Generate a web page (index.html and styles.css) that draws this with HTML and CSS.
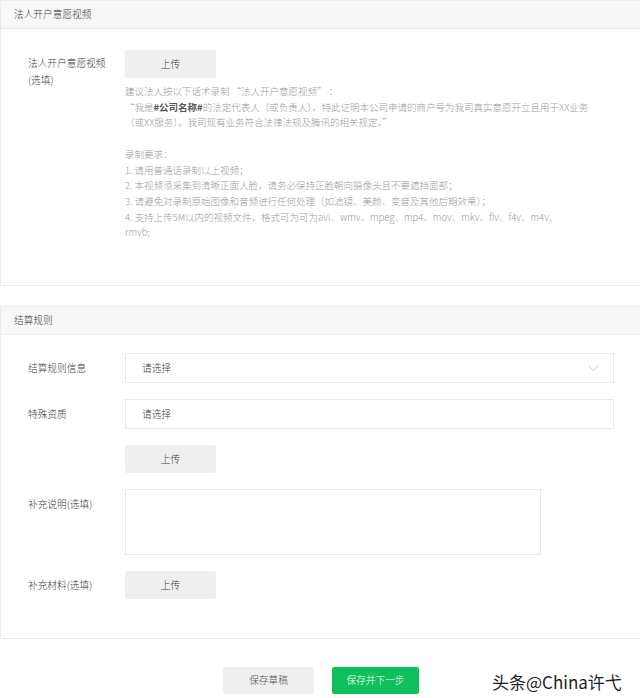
FILE: index.html
```html
<!DOCTYPE html>
<html lang="zh-CN">
<head>
<meta charset="utf-8">
<title>法人开户意愿视频</title>
<link rel="stylesheet" href="styles.css">
</head>
<body>
<div class="page">
  <section class="card card-video">
    <div class="card-head">法人开户意愿视频</div>
    <div class="card-body">
      <div class="row">
        <div class="label label-multi">法人开户意愿视频<br>(选填)</div>
        <div class="control">
          <div class="btn-upload">上传</div>
          <div class="desc">
            <div>建议法人按以下话术录制 “法人开户意愿视频” ：</div>
            <div>“我是<b>#公司名称#</b>的法定代表人（或负责人），特此证明本公司申请的商户号为我司真实意愿开立且用于XX业务</div>
            <div>（或XX服务）。我司现有业务符合法律法规及腾讯的相关规定。”</div>
            <div class="blank"></div>
            <div>录制要求：</div>
            <div>1. 请用普通话录制以上视频；</div>
            <div>2. 本视频须采集到清晰正面人脸，请务必保持正脸朝向摄像头且不要遮挡面部；</div>
            <div>3. 请避免对录制原始图像和音频进行任何处理（如滤镜、美颜、变音及其他后期效果）；</div>
            <div>4. 支持上传5M以内的视频文件，格式可为可为avi、wmv、mpeg、mp4、mov、mkv、flv、f4v、m4v、</div>
            <div>rmvb;</div>
          </div>
        </div>
      </div>
    </div>
  </section>

  <section class="card card-rules">
    <div class="card-head">结算规则</div>
    <div class="card-body form">
      <div class="row">
        <div class="label">结算规则信息</div>
        <div class="select">
          <span>请选择</span>
          <svg class="chev" width="11" height="7" viewBox="0 0 11 7"><polyline points="0.5,0.5 5.5,5.5 10.5,0.5" fill="none" stroke="#cfcfcf" stroke-width="1"/></svg>
        </div>
      </div>
      <div class="row">
        <div class="label">特殊资质</div>
        <div class="select"><span>请选择</span></div>
      </div>
      <div class="row">
        <div class="label"></div>
        <div class="btn-upload">上传</div>
      </div>
      <div class="row">
        <div class="label">补充说明(选填)</div>
        <div class="textarea"></div>
      </div>
      <div class="row">
        <div class="label label-btn">补充材料(选填)</div>
        <div class="btn-upload">上传</div>
      </div>
    </div>
  </section>

  <div class="footer">
    <div class="btn btn-draft">保存草稿</div>
    <div class="btn btn-next">保存并下一步</div>
    <div class="watermark">头条@China许弋</div>
  </div>
</div>
</body>
</html>
```

FILE: styles.css
```css
* { box-sizing: border-box; }

html, body {
  margin: 0;
  padding: 0;
  background: #ffffff;
}

body {
  font-family: "Noto Sans CJK SC", "Microsoft YaHei", sans-serif;
  font-size: 9.7px;
  font-weight: 300;
  color: #3a3a3a;
  overflow: hidden;
}

.page {
  width: 640px;
}

.card {
  border: 1px solid #ececec;
  border-right: none;
  background: #fff;
}

.card-rules {
  margin-top: 20px;
}

.card-head {
  height: 28px;
  line-height: 27px;
  padding-left: 13px;
  background: #f7f7f7;
  border-bottom: 1px solid #ececec;
  color: #3a3a3a;
}

.card-video .card-body {
  padding: 21px 0 44px 27px;
}

.card-rules .card-body {
  padding: 18px 0 39px 27px;
  display: flex;
  flex-direction: column;
  gap: 16px;
}

.row {
  display: flex;
  align-items: flex-start;
}

.label {
  width: 97px;
  flex: none;
  line-height: 30px;
  color: #3a3a3a;
}

.label-multi {
  line-height: 17px;
  padding-top: 5px;
}

.label-btn {
  line-height: 28px;
}

.control {
  display: flex;
  flex-direction: column;
}

.btn-upload {
  width: 91px;
  height: 28px;
  line-height: 28px;
  text-align: center;
  background: #efefef;
  border-radius: 2px;
  color: #3a3a3a;
}

.desc {
  margin-top: 6px;
  color: #9a9a9a;
  font-size: 9.5px;
  line-height: 15.7px;
  white-space: nowrap;
}

.desc b {
  color: #555;
  font-weight: bold;
}

.desc .blank {
  height: 15.7px;
}

.select {
  position: relative;
  width: 489px;
  height: 30px;
  line-height: 28px;
  border: 1px solid #e8e8e8;
  padding-left: 16px;
  color: #3a3a3a;
}

.chev {
  position: absolute;
  right: 14px;
  top: 11px;
}

.textarea {
  width: 416px;
  height: 66px;
  border: 1px solid #e8e8e8;
}

.footer {
  position: relative;
  display: flex;
  justify-content: center;
  gap: 18px;
  padding-top: 28px;
  padding-left: 2px;
}

.btn {
  height: 27px;
  line-height: 27px;
  text-align: center;
  border-radius: 2px;
}

.btn-draft {
  width: 91px;
  background: #efefef;
  color: #555;
}

.btn-next {
  width: 87px;
  background: #0fc15c;
  color: #ffffff;
}

.watermark {
  position: absolute;
  left: 492px;
  top: 30px;
  font-size: 17px;
  font-weight: 400;
  color: #1e1e1e;
  text-shadow: 1px 0 0 #fff, -1px 0 0 #fff, 0 1px 0 #fff, 0 -1px 0 #fff;
}
```
